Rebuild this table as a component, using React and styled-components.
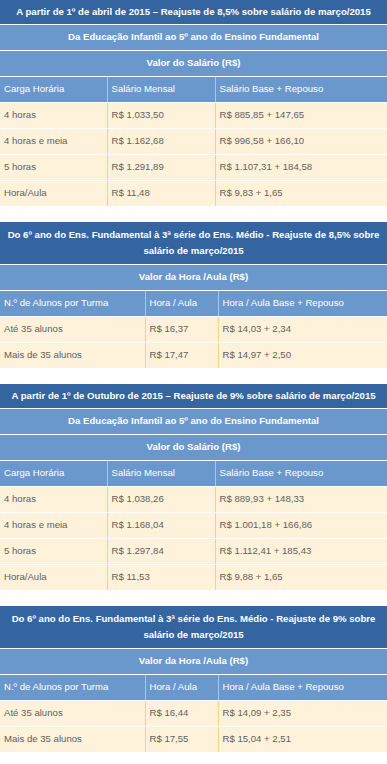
import React from 'react';
import styled, { createGlobalStyle } from 'styled-components';

const GlobalStyle = createGlobalStyle`
    html, body {
        margin:0;
        padding:0;
        background:#fff;
    }
    body {
        font-family:"Liberation Sans", Arial, sans-serif;
        font-size:9.6px;
    }
`;

const Page = styled.div`
    width:387px;
    display:flex;
    flex-direction:column;
    gap:15px;
`;

const Table = styled.table`
    width:100%;
    border-collapse:collapse;
    table-layout:fixed;
`;

const TitleCell = styled.td`
    background:#3565a0;
    color:#fff;
    font-weight:700;
    text-align:center;
    line-height:16px;
    padding:${p => (p.$tall ? '5px 4px' : '4px')};
    border-bottom:1px solid #fff;
`;

const BandCell = styled.td`
    background:#6b98cc;
    color:#fff;
    font-weight:700;
    text-align:center;
    line-height:16px;
    padding:4px 4px 5px;
    border-bottom:1px solid #fff;
`;

const HeadCell = styled.td`
    background:#6b98cc;
    color:#fff;
    line-height:16px;
    padding:4px 4px 5px;
    border-bottom:1px solid #fff;
    & + & {
        border-left:1px solid #a8c7ef;
    }
`;

const DataCell = styled.td`
    background:#fff2da;
    color:#5f5f5f;
    line-height:16px;
    padding:4px 4px 5px;
    border-bottom:1px solid #fff;
    & + & {
        border-left:1px solid #f8d37f;
    }
`;

const Cols = ({ widths }) => (
    <colgroup>
        {widths.map((w, i) => <col key={i} style={{ width: w }} />)}
    </colgroup>
);

const SalaryTable = ({ title, rows }) => (
    <Table>
        <Cols widths={[107, 108, 172]} />
        <tbody>
            <tr><TitleCell colSpan={3}>{title}</TitleCell></tr>
            <tr><BandCell colSpan={3}>Da Educação Infantil ao 5º ano do Ensino Fundamental</BandCell></tr>
            <tr><BandCell colSpan={3}>Valor do Salário (R$)</BandCell></tr>
            <tr>
                <HeadCell>Carga Horária</HeadCell>
                <HeadCell>Salário Mensal</HeadCell>
                <HeadCell>Salário Base + Repouso</HeadCell>
            </tr>
            {rows.map(r => (
                <tr key={r[0]}>
                    {r.map((c, i) => <DataCell key={i}>{c}</DataCell>)}
                </tr>
            ))}
        </tbody>
    </Table>
);

const HourTable = ({ title, rows }) => (
    <Table>
        <Cols widths={[145, 73, 169]} />
        <tbody>
            <tr><TitleCell $tall colSpan={3}>{title}</TitleCell></tr>
            <tr><BandCell colSpan={3}>Valor da Hora /Aula (R$)</BandCell></tr>
            <tr>
                <HeadCell>N.º de Alunos por Turma</HeadCell>
                <HeadCell>Hora / Aula</HeadCell>
                <HeadCell>Hora / Aula Base + Repouso</HeadCell>
            </tr>
            {rows.map(r => (
                <tr key={r[0]}>
                    {r.map((c, i) => <DataCell key={i}>{c}</DataCell>)}
                </tr>
            ))}
        </tbody>
    </Table>
);

const App = () => {
    return (
        <>
            <GlobalStyle />
            <Page>
                <SalaryTable
                    title="A partir de 1º de abril de 2015 – Reajuste de 8,5% sobre salário de março/2015"
                    rows={[
                        ['4 horas', 'R$ 1.033,50', 'R$ 885,85 + 147,65'],
                        ['4 horas e meia', 'R$ 1.162,68', 'R$ 996,58 + 166,10'],
                        ['5 horas', 'R$ 1.291,89', 'R$ 1.107,31 + 184,58'],
                        ['Hora/Aula', 'R$ 11,48', 'R$ 9,83 + 1,65'],
                    ]}
                />
                <HourTable
                    title="Do 6º ano do Ens. Fundamental à 3ª série do Ens. Médio - Reajuste de 8,5% sobre salário de março/2015"
                    rows={[
                        ['Até 35 alunos', 'R$ 16,37', 'R$ 14,03 + 2,34'],
                        ['Mais de 35 alunos', 'R$ 17,47', 'R$ 14,97 + 2,50'],
                    ]}
                />
                <SalaryTable
                    title="A partir de 1º de Outubro de 2015 – Reajuste de 9% sobre salário de março/2015"
                    rows={[
                        ['4 horas', 'R$ 1.038,26', 'R$ 889,93 + 148,33'],
                        ['4 horas e meia', 'R$ 1.168,04', 'R$ 1.001,18 + 166,86'],
                        ['5 horas', 'R$ 1.297,84', 'R$ 1.112,41 + 185,43'],
                        ['Hora/Aula', 'R$ 11,53', 'R$ 9,88 + 1,65'],
                    ]}
                />
                <HourTable
                    title="Do 6º ano do Ens. Fundamental à 3ª série do Ens. Médio - Reajuste de 9% sobre salário de março/2015"
                    rows={[
                        ['Até 35 alunos', 'R$ 16,44', 'R$ 14,09 + 2,35'],
                        ['Mais de 35 alunos', 'R$ 17,55', 'R$ 15,04 + 2,51'],
                    ]}
                />
            </Page>
        </>
    );
};

export default App;
